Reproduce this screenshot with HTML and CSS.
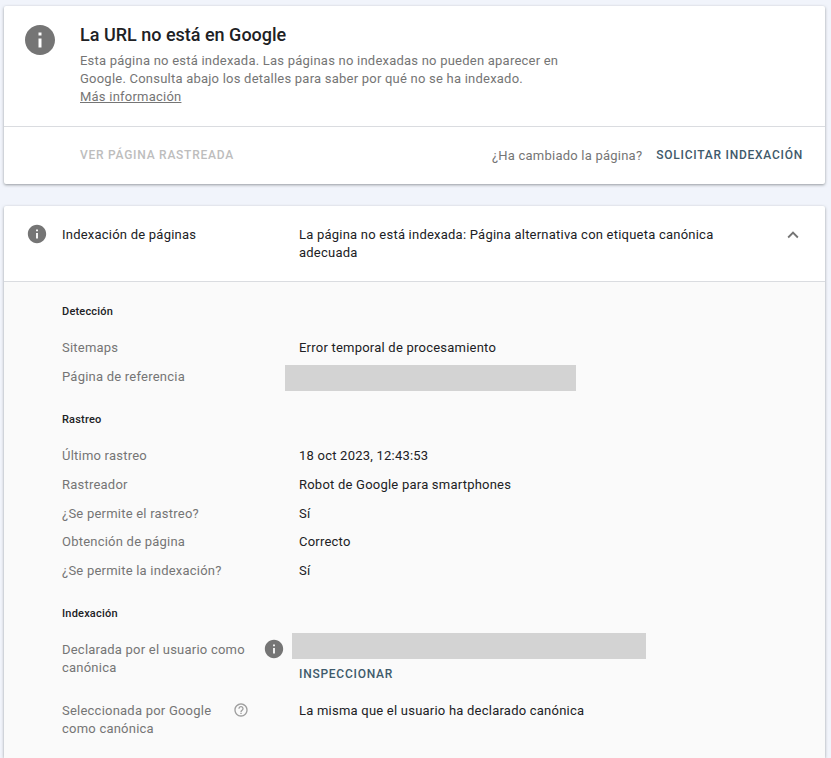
FILE: index.html
```html
<!DOCTYPE html>
<html lang="es">
<head>
  <meta charset="UTF-8" />
  <meta name="viewport" content="width=device-width, initial-scale=1.0" />
  <title>Inspección de URLs</title>
  <link rel="stylesheet" href="styles.css">
</head>
<body>
  <div class="card status">
    <div class="status-top">
      <svg class="status-icon" viewBox="0 0 24 24"><path d="M12 2C6.48 2 2 6.48 2 12s4.48 10 10 10 10-4.48 10-10S17.52 2 12 2zm1 15h-2v-6h2v6zm0-8h-2V7h2v2z"/></svg>
      <div class="status-text">
        <h1>La URL no está en Google</h1>
        <p>Esta página no está indexada. Las páginas no indexadas no pueden aparecer en Google. Consulta abajo los detalles para saber por qué no se ha indexado.</p>
        <a href="#">Más información</a>
      </div>
    </div>
    <div class="status-actions">
      <span class="btn-disabled">VER PÁGINA RASTREADA</span>
      <span class="changed">¿Ha cambiado la página?</span>
      <a class="btn" href="#">SOLICITAR INDEXACIÓN</a>
    </div>
  </div>

  <div class="card detail">
    <div class="detail-head">
      <svg class="head-icon" viewBox="0 0 24 24"><path d="M12 2C6.48 2 2 6.48 2 12s4.48 10 10 10 10-4.48 10-10S17.52 2 12 2zm1 15h-2v-6h2v6zm0-8h-2V7h2v2z"/></svg>
      <div class="head-label">Indexación de páginas</div>
      <div class="head-value">La página no está indexada: Página alternativa con etiqueta canónica adecuada</div>
      <svg class="chevron" viewBox="0 0 24 24"><path d="M7.41 15.41L12 10.83l4.59 4.58L18 14l-6-6-6 6z"/></svg>
    </div>
    <div class="detail-body">
      <h4 class="first">Detección</h4>
      <div class="row"><div class="label">Sitemaps</div><div class="value">Error temporal de procesamiento</div></div>
      <div class="row"><div class="label">Página de referencia</div><div class="redacted short"></div></div>

      <h4>Rastreo</h4>
      <div class="row"><div class="label">Último rastreo</div><div class="value">18 oct 2023, 12:43:53</div></div>
      <div class="row"><div class="label">Rastreador</div><div class="value">Robot de Google para smartphones</div></div>
      <div class="row"><div class="label">¿Se permite el rastreo?</div><div class="value">Sí</div></div>
      <div class="row"><div class="label">Obtención de página</div><div class="value">Correcto</div></div>
      <div class="row"><div class="label">¿Se permite la indexación?</div><div class="value">Sí</div></div>

      <h4>Indexación</h4>
      <div class="row tall declared">
        <div class="label narrow">Declarada por el usuario como canónica</div>
        <svg class="row-icon" viewBox="0 0 24 24"><path d="M12 2C6.48 2 2 6.48 2 12s4.48 10 10 10 10-4.48 10-10S17.52 2 12 2zm1 15h-2v-6h2v6zm0-8h-2V7h2v2z"/></svg>
        <div class="value-stack">
          <div class="redacted long"></div>
          <a class="btn small" href="#">INSPECCIONAR</a>
        </div>
      </div>
      <div class="row tall selected">
        <div class="label narrow2">Seleccionada por Google como canónica</div>
        <svg class="help-icon" viewBox="0 0 24 24"><path d="M11 18h2v-2h-2v2zm1-16C6.48 2 2 6.48 2 12s4.48 10 10 10 10-4.48 10-10S17.52 2 12 2zm0 18c-4.41 0-8-3.59-8-8s3.59-8 8-8 8 3.59 8 8-3.59 8-8 8zm0-14c-2.21 0-4 1.79-4 4h2c0-1.1.9-2 2-2s2 .9 2 2c0 2-3 1.75-3 5h2c0-2.25 3-2.5 3-5 0-2.21-1.79-4-4-4z"/></svg>
        <div class="value">La misma que el usuario ha declarado canónica</div>
      </div>
    </div>
  </div>
</body>
</html>
```

FILE: styles.css
```css
html, body {
  height: 100%;
}
body {
  display: flex;
  flex-direction: column;
  margin: 0;
  padding: 6px 6px 0 4px;
  box-sizing: border-box;
  overflow: hidden;
  background: #f1f4fb;
  font-family: Roboto, "Liberation Sans", sans-serif;
  font-size: 14px;
  color: #202124;
}
.card {
  background: white;
  border-radius: 2px;
  box-shadow: 0 1px 3px rgba(60,64,67,0.5);
}
.status {
  flex: none;
  height: 178px;
  margin-bottom: 22px;
}
.status-top {
  display: flex;
  height: 120px;
  border-bottom: 1px solid #dadce0;
  box-sizing: content-box;
}
.status-icon {
  width: 36px;
  height: 36px;
  margin: 16px 0 0 18px;
  fill: #757575;
  flex: none;
}
.status-text {
  margin-left: 22px;
  width: 490px;
}
h1 {
  margin: 17px 0 0;
  font-size: 18px;
  line-height: 24px;
  font-weight: 500;
  color: #202124;
}
.status-text p {
  margin: 5px 0 0;
  font-size: 13px;
  line-height: 18px;
  letter-spacing: 0.225px;
  color: #757575;
}
.status-text a {
  font-size: 13px;
  line-height: 18px;
  letter-spacing: 0.225px;
  color: #757575;
}
.status-actions {
  display: flex;
  align-items: center;
  height: 56px;
  padding: 0 22px 0 76px;
}
.btn-disabled {
  font-size: 12px;
  font-weight: 500;
  letter-spacing: 0.75px;
  color: #bdbdbd;
  margin-right: auto;
}
.changed {
  font-size: 13px;
  letter-spacing: 0.225px;
  color: #757575;
  margin-right: 14px;
}
.btn {
  font-size: 12px;
  font-weight: 500;
  letter-spacing: 0.75px;
  color: #3f5a6b;
  text-decoration: none;
}
.detail {
  flex: 1;
  display: flex;
  flex-direction: column;
  min-height: 0;
}
.detail-head {
  display: flex;
  align-items: flex-start;
  flex: none;
  height: 76px;
  box-sizing: border-box;
  border-bottom: 1px solid #dadce0;
}
.head-icon {
  width: 22px;
  height: 22px;
  margin: 17px 0 0 22px;
  fill: #757575;
  flex: none;
}
.head-label {
  width: 237px;
  margin: 20px 0 0 14px;
  line-height: 18px;
  font-size: 13px;
  letter-spacing: 0.225px;
  flex: none;
}
.head-value {
  width: 440px;
  margin-top: 20px;
  font-size: 13px;
  line-height: 18px;
  letter-spacing: 0.225px;
}
.chevron {
  width: 22px;
  height: 22px;
  margin: 18px 0 0 43px;
  fill: #757575;
  flex: none;
}
.detail-body {
  flex: 1;
  background: #fafafa;
  padding: 0 0 0 58px;
}
h4 {
  margin: 15.5px 0 19px;
  font-size: 11px;
  line-height: 16px;
  font-weight: 500;
  letter-spacing: 0.2px;
}
h4.first {
  margin-top: 0;
  padding-top: 22px;
}
.row {
  display: flex;
  align-items: flex-start;
  height: 28.75px;
  font-size: 13px;
  line-height: 18px;
  letter-spacing: 0.225px;
}
.label {
  width: 237px;
  flex: none;
  color: #757575;
}
.value {
  color: #202124;
}
.redacted {
  background: #d3d3d3;
  height: 26px;
}
.redacted.short {
  width: 291px;
  margin: -3px 0 0 -14px;
}
.row.tall {
  height: auto;
}
.declared {
  margin-top: -8.25px;
}
.label.narrow {
  width: 194px;
  margin-top: 8px;
}
.row-icon {
  width: 22px;
  height: 22px;
  margin: 5px 0 0 7px;
  fill: #757575;
  flex: none;
}
.value-stack {
  margin-left: 7px;
}
.redacted.long {
  width: 354px;
}
.btn.small {
  display: block;
  margin: 7px 0 0 7px;
  line-height: 16px;
}
.selected {
  margin-top: 20px;
}
.label.narrow2 {
  width: 160px;
}
.help-icon {
  width: 16px;
  height: 16px;
  margin: 0 0 0 11px;
  fill: #9e9e9e;
  flex: none;
}
.selected .value {
  margin-left: 50px;
}
```
